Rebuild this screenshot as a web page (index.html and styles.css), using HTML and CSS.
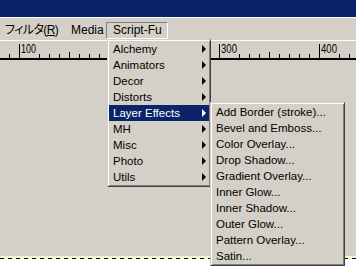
FILE: index.html
```html
<!doctype html>
<html>
<head>
    <meta charset="utf-8">
    <title>Script-Fu</title>
    <link rel="stylesheet" href="styles.css">
</head>
<body>
    <div class="window">
        <div class="titlebar"></div>

        <div class="menubar">
            <span class="menubar-item first">フィルタ(<u>R</u>)</span>
            <span class="menubar-item media">Media</span>
            <span class="menubar-item open">Script-Fu</span>
        </div>

        <div class="ruler">
            <svg width="356" height="20" viewBox="0 0 356 20">
                <rect x="0" y="0" width="356" height="1" fill="#ffffff" />
                <path stroke="#000" stroke-width="1" d="M9.5 14v4 M39.5 14v4 M49.5 14v4 M59.5 14v4 M79.5 14v4 M89.5 14v4 M99.5 14v4
                    M239.5 14v4 M249.5 14v4 M259.5 14v4 M279.5 14v4 M289.5 14v4 M299.5 14v4 M309.5 14v4
                    M339.5 14v4 M349.5 14v4
                    M69.5 12v6 M269.5 12v6
                    M19.5 4v14 M219.5 4v14 M319.5 4v14" />
                <rect x="0" y="18" width="356" height="2" fill="#000" />
                <text class="ruler-label" x="21" y="13" textLength="15" lengthAdjust="spacingAndGlyphs">100</text>
                <text class="ruler-label" x="221" y="13" textLength="16" lengthAdjust="spacingAndGlyphs">300</text>
                <text class="ruler-label" x="321" y="13" textLength="16" lengthAdjust="spacingAndGlyphs">400</text>
            </svg>
        </div>

        <div class="workspace"></div>
        <div class="canvas"></div>

        <!-- open menus -->
        <ul class="menu menu-scriptfu">
            <li class="menu-item">Alchemy<span class="arrow"></span></li>
            <li class="menu-item">Animators<span class="arrow"></span></li>
            <li class="menu-item">Decor<span class="arrow"></span></li>
            <li class="menu-item">Distorts<span class="arrow"></span></li>
            <li class="menu-item active">Layer Effects<span class="arrow"></span></li>
            <li class="menu-item">MH<span class="arrow"></span></li>
            <li class="menu-item">Misc<span class="arrow"></span></li>
            <li class="menu-item">Photo<span class="arrow"></span></li>
            <li class="menu-item">Utils<span class="arrow"></span></li>
        </ul>

        <ul class="menu menu-effects">
            <li class="menu-item">Add Border (stroke)...</li>
            <li class="menu-item">Bevel and Emboss...</li>
            <li class="menu-item">Color Overlay...</li>
            <li class="menu-item">Drop Shadow...</li>
            <li class="menu-item">Gradient Overlay...</li>
            <li class="menu-item">Inner Glow...</li>
            <li class="menu-item">Inner Shadow...</li>
            <li class="menu-item">Outer Glow...</li>
            <li class="menu-item">Pattern Overlay...</li>
            <li class="menu-item">Satin...</li>
        </ul>
    </div>
</body>
</html>
```

FILE: styles.css
```css
body {
    margin: 0;
    background: #d4d0c8;
    font-family: "Liberation Sans", "Noto Sans CJK JP", sans-serif;
    font-size: 12px;
    color: #000;
}

.window {
    position: relative;
    width: 356px;
    height: 268px;
    overflow: hidden;
    display: flex;
    flex-direction: column;
}

.titlebar {
    height: 17px;
    background: #0a246a;
}

.menubar {
    display: flex;
    align-items: flex-start;
    height: 22px;
    border-top: 1px solid #ffffff;
}

.menubar-item {
    box-sizing: border-box;
    height: 17px;
    margin-top: 4px;
    line-height: 15px;
    border: 1px solid transparent;
    white-space: nowrap;
}

.menubar-item.first {
    width: 63px;
    padding-left: 4px;
    font-feature-settings: "palt";
    letter-spacing: -0.6px;
}

.menubar-item.media {
    width: 43px;
    padding-left: 7px;
}

.menubar-item.open {
    width: 62px;
    padding-left: 6px;
    border-color: #808080 #ffffff #ffffff #808080;
}

.ruler {
    height: 20px;
}

.ruler svg {
    display: block;
}

.ruler-label {
    font-family: "Liberation Sans", sans-serif;
    font-size: 12px;
    fill: #000;
}

.workspace {
    flex: 1;
}

.canvas {
    height: 10px;
    border-top: 2px solid #f6f6c6;
    background:
        repeating-linear-gradient(90deg, #000 0 4px, #f6f6c6 4px 8px) top / 100% 1px no-repeat,
        #ffffff;
}

/* popup menus */
.menu {
    position: absolute;
    box-sizing: border-box;
    margin: 0;
    padding: 1px;
    list-style: none;
    background: #d4d0c8;
    border: 1px solid;
    border-color: #d4d0c8 #404040 #404040 #d4d0c8;
    box-shadow: inset 1px 1px 0 #ffffff, inset -1px -1px 0 #808080;
    font-size: 11.5px;
}

.menu-scriptfu {
    left: 107px;
    top: 39px;
    width: 104px;
}

.menu-effects {
    left: 210px;
    top: 102px;
    width: 135px;
}

.menu-item {
    display: flex;
    align-items: center;
    height: 16px;
    padding: 0 3px 0 4px;
    white-space: nowrap;
}

.menu-item.active {
    background: #0a246a;
    color: #ffffff;
}

.arrow {
    margin-left: auto;
    width: 0;
    height: 0;
    border-left: 4px solid #000;
    border-top: 4px solid transparent;
    border-bottom: 4px solid transparent;
}

.menu-item.active .arrow {
    border-left-color: #ffffff;
}
```
